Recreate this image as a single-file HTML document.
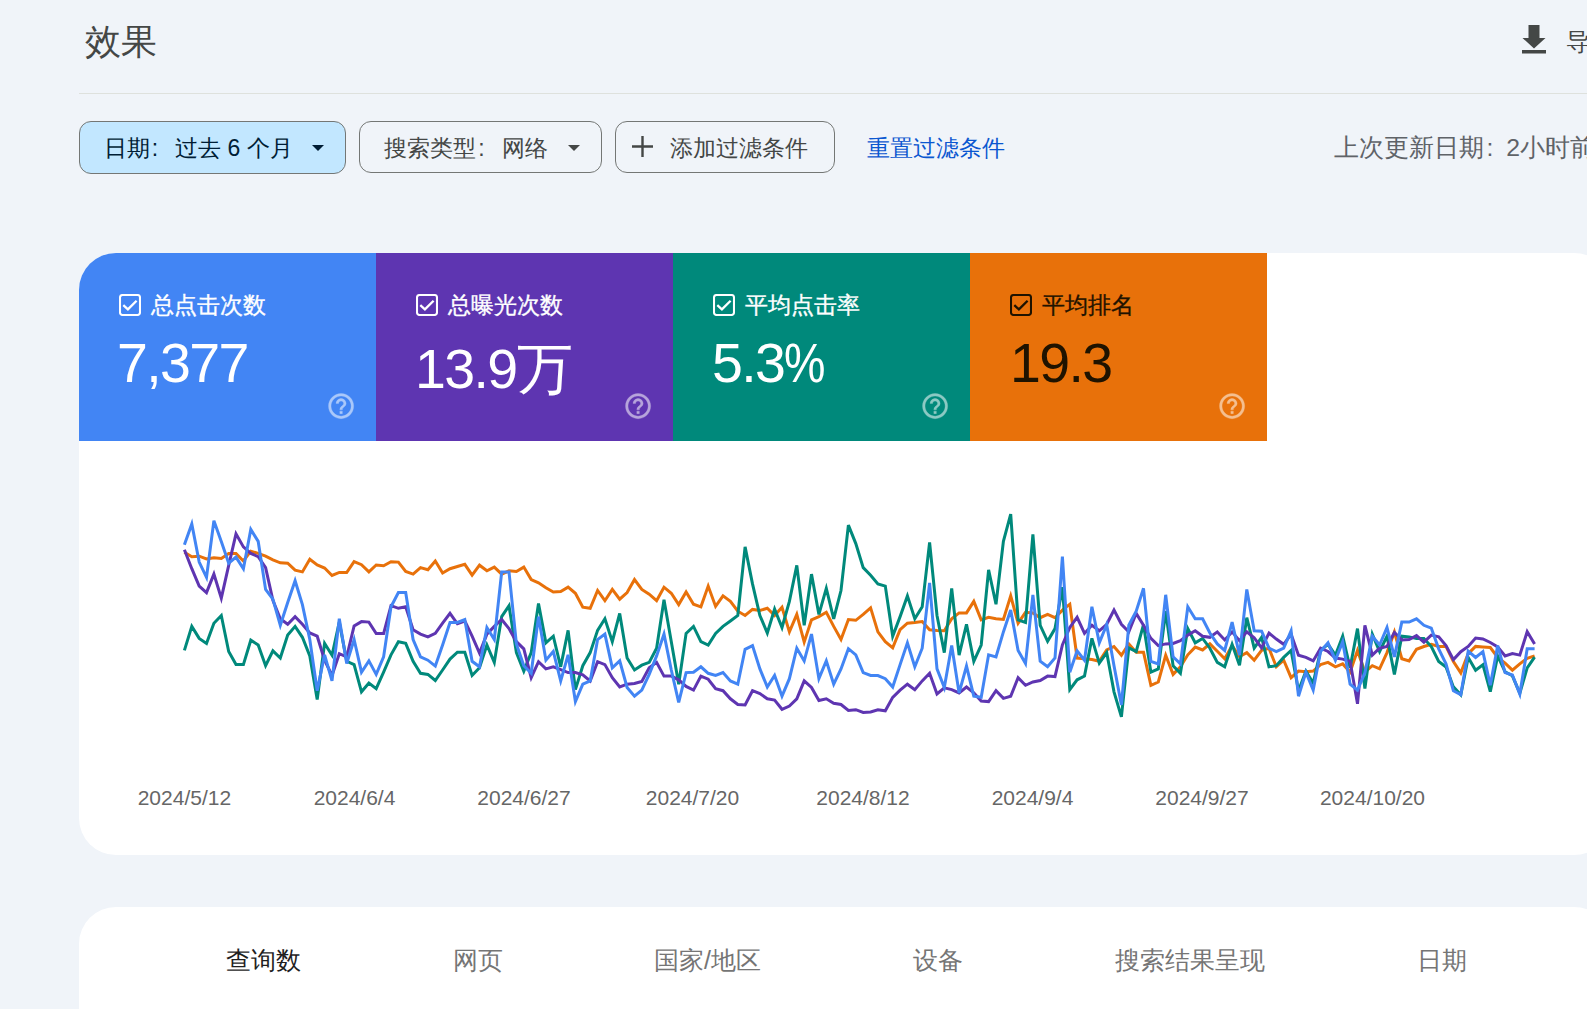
<!DOCTYPE html>
<html><head><meta charset="utf-8">
<style>
html,body{margin:0;padding:0;width:1587px;height:1009px;overflow:hidden;background:#f0f4f9;}
body{position:relative;font-family:"Liberation Sans",sans-serif;}
.a{position:absolute;line-height:1;white-space:nowrap;}
.title{left:85px;top:24px;font-size:36px;color:#444746;}
.hr{position:absolute;left:79px;top:93px;width:1520px;height:1px;background:#dee1dd;}
.chip{position:absolute;top:121px;height:51px;border:1px solid #747775;border-radius:12px;box-sizing:border-box;}
.chip1{left:79px;width:267px;height:53px;background:#c2e7ff;}
.chip2{left:359px;width:243px;height:52px;}
.chip3{left:615px;width:220px;height:52px;}
.ct{font-size:23px;top:137px;color:#444746;}
.cl{display:inline-block;width:calc(1em + 2.5px);text-indent:0.1em;}
.tri{position:absolute;width:0;height:0;border-left:6.3px solid transparent;border-right:6.3px solid transparent;border-top:6.5px solid #444746;}
.card{position:absolute;top:253px;width:297px;height:188px;}
.cb{position:absolute;top:294px;width:22px;height:22px;box-sizing:border-box;border:2.2px solid #fff;border-radius:3px;}
.lbl{font-size:23px;top:293.6px;color:#fff;-webkit-text-stroke:0.35px currentColor;}
.num{font-size:55.5px;color:#fff;letter-spacing:-1.6px;}
.help{position:absolute;top:393px;width:26px;height:26px;}
.white{position:absolute;left:79px;top:253px;width:1532px;height:602px;background:#fff;border-radius:37px;}
.white2{position:absolute;left:79px;top:907px;width:1532px;height:300px;background:#fff;border-radius:37px;}
.dl{position:absolute;top:787px;width:200px;text-align:center;font-size:21px;color:#666;line-height:1;}
.tab{font-size:25px;top:947.5px;color:#757575;}
</style></head><body>
<div class="a title">效果</div>
<!-- download icon -->
<svg style="position:absolute;left:1521px;top:24px" width="26" height="31" viewBox="0 0 26 31">
<path d="M7.5 1h11v13h6L13 24.5 1.5 14h6z" fill="#444746"/>
<rect x="1" y="26" width="24" height="3.5" fill="#444746"/>
</svg>
<div class="a" style="left:1566px;top:30px;font-size:24px;color:#444746">导出</div>
<div class="hr"></div>

<div class="chip chip1"></div>
<div class="a ct" style="left:103.5px;color:#001d35">日期<span class="cl">:</span>过去 6 个月</div>
<div class="tri" style="left:312px;top:144.5px;border-top-color:#001d35"></div>
<div class="chip chip2"></div>
<div class="a ct" style="left:384px">搜索类型<span class="cl">:</span>网络</div>
<div class="tri" style="left:568.3px;top:144.5px"></div>
<div class="chip chip3"></div>
<svg style="position:absolute;left:632px;top:136px" width="21" height="21" viewBox="0 0 21 21"><path d="M9.3 0h2.4v9.3H21v2.4h-9.3V21H9.3v-9.3H0V9.3h9.3z" fill="#444746"/></svg>
<div class="a ct" style="left:670px">添加过滤条件</div>
<div class="a ct" style="left:867px;color:#0b57d0">重置过滤条件</div>
<div class="a ct" style="left:1334px;top:136px;font-size:24.8px;color:#5f6368">上次更新日期<span class="cl" style="width:0.9em">:</span>2小时前</div>

<div class="white"></div>
<div class="card" style="left:79px;background:#4285f4;border-top-left-radius:37px"></div>
<div class="card" style="left:376px;background:#5e35b1"></div>
<div class="card" style="left:673px;background:#00897b"></div>
<div class="card" style="left:970px;background:#e8710a"></div>

<div class="a lbl" style="left:151px">总点击次数</div>
<div class="a num" style="left:117px;top:336px">7,377</div>
<div class="a lbl" style="left:448px">总曝光次数</div>
<div class="a num" style="left:415px;top:342px">13.9万</div>
<div class="a lbl" style="left:745px">平均点击率</div>
<div class="a num" style="left:712px;top:336px">5.3<span style="display:inline-block;transform:scaleX(0.84);transform-origin:0 0">%</span></div>
<div class="a lbl" style="left:1042px;color:#1f1300">平均排名</div>
<div class="a num" style="left:1010px;top:336px;color:#1f1300">19.3</div>

<svg style="position:absolute;left:119px;top:294px" width="22" height="22" viewBox="0 0 22 22"><rect x="1" y="1" width="20" height="20" rx="2.5" fill="none" stroke="#fff" stroke-width="2.1"/><path d="M4.3 11.2l4.6 4.2 8.7-8.7" fill="none" stroke="#fff" stroke-width="2.3"/></svg>
<svg style="position:absolute;left:325.9px;top:390.5px;opacity:0.55" width="30.2" height="30.2" viewBox="0 0 24 24"><path d="M11 18h2v-2h-2v2zm1-16C6.48 2 2 6.48 2 12s4.48 10 10 10 10-4.48 10-10S17.52 2 12 2zm0 18c-4.41 0-8-3.59-8-8s3.59-8 8-8 8 3.59 8 8-3.59 8-8 8zm0-14c-2.21 0-4 1.79-4 4h2c0-1.1.9-2 2-2s2 .9 2 2c0 2-3 1.75-3 5h2c0-2.25 3-2.5 3-5 0-2.21-1.79-4-4-4z" fill="#fff" stroke="#fff" stroke-width="0.25"/></svg>
<svg style="position:absolute;left:416px;top:294px" width="22" height="22" viewBox="0 0 22 22"><rect x="1" y="1" width="20" height="20" rx="2.5" fill="none" stroke="#fff" stroke-width="2.1"/><path d="M4.3 11.2l4.6 4.2 8.7-8.7" fill="none" stroke="#fff" stroke-width="2.3"/></svg>
<svg style="position:absolute;left:622.9px;top:390.5px;opacity:0.55" width="30.2" height="30.2" viewBox="0 0 24 24"><path d="M11 18h2v-2h-2v2zm1-16C6.48 2 2 6.48 2 12s4.48 10 10 10 10-4.48 10-10S17.52 2 12 2zm0 18c-4.41 0-8-3.59-8-8s3.59-8 8-8 8 3.59 8 8-3.59 8-8 8zm0-14c-2.21 0-4 1.79-4 4h2c0-1.1.9-2 2-2s2 .9 2 2c0 2-3 1.75-3 5h2c0-2.25 3-2.5 3-5 0-2.21-1.79-4-4-4z" fill="#fff" stroke="#fff" stroke-width="0.25"/></svg>
<svg style="position:absolute;left:713px;top:294px" width="22" height="22" viewBox="0 0 22 22"><rect x="1" y="1" width="20" height="20" rx="2.5" fill="none" stroke="#fff" stroke-width="2.1"/><path d="M4.3 11.2l4.6 4.2 8.7-8.7" fill="none" stroke="#fff" stroke-width="2.3"/></svg>
<svg style="position:absolute;left:919.9px;top:390.5px;opacity:0.55" width="30.2" height="30.2" viewBox="0 0 24 24"><path d="M11 18h2v-2h-2v2zm1-16C6.48 2 2 6.48 2 12s4.48 10 10 10 10-4.48 10-10S17.52 2 12 2zm0 18c-4.41 0-8-3.59-8-8s3.59-8 8-8 8 3.59 8 8-3.59 8-8 8zm0-14c-2.21 0-4 1.79-4 4h2c0-1.1.9-2 2-2s2 .9 2 2c0 2-3 1.75-3 5h2c0-2.25 3-2.5 3-5 0-2.21-1.79-4-4-4z" fill="#fff" stroke="#fff" stroke-width="0.25"/></svg>
<svg style="position:absolute;left:1010px;top:294px" width="22" height="22" viewBox="0 0 22 22"><rect x="1" y="1" width="20" height="20" rx="2.5" fill="none" stroke="#1f1300" stroke-width="2.1"/><path d="M4.3 11.2l4.6 4.2 8.7-8.7" fill="none" stroke="#1f1300" stroke-width="2.3"/></svg>
<svg style="position:absolute;left:1216.9px;top:390.5px;opacity:0.55" width="30.2" height="30.2" viewBox="0 0 24 24"><path d="M11 18h2v-2h-2v2zm1-16C6.48 2 2 6.48 2 12s4.48 10 10 10 10-4.48 10-10S17.52 2 12 2zm0 18c-4.41 0-8-3.59-8-8s3.59-8 8-8 8 3.59 8 8-3.59 8-8 8zm0-14c-2.21 0-4 1.79-4 4h2c0-1.1.9-2 2-2s2 .9 2 2c0 2-3 1.75-3 5h2c0-2.25 3-2.5 3-5 0-2.21-1.79-4-4-4z" fill="#fff" stroke="#fff" stroke-width="0.25"/></svg>
<!-- CHART -->
<svg style="position:absolute;left:0;top:0" width="1587" height="1009" viewBox="0 0 1587 1009"><polyline fill="none" stroke="#e8710a" stroke-width="3" points="184.4,552.3 191.8,556.7 199.2,556.2 206.5,558.9 213.9,557.8 221.3,558.4 228.7,553.4 236.0,553.4 243.4,561.0 250.8,551.2 258.2,553.4 265.6,556.2 272.9,559.9 280.3,562.8 287.7,563.2 295.1,570.2 302.4,571.9 309.8,559.3 317.2,565.0 324.6,568.0 332.0,575.5 339.3,572.4 346.7,572.6 354.1,561.7 361.5,564.7 368.9,571.9 376.2,565.0 383.6,565.8 391.0,561.7 398.4,562.1 405.7,571.5 413.1,574.1 420.5,567.6 427.9,569.8 435.3,561.0 442.6,573.0 450.0,568.7 457.4,566.5 464.8,564.3 472.1,575.2 479.5,565.2 486.9,570.8 494.3,567.1 501.7,574.1 509.0,570.8 516.4,571.5 523.8,567.1 531.2,579.6 538.5,582.8 545.9,587.8 553.3,592.0 560.7,591.6 568.1,587.2 575.4,593.3 582.8,607.2 590.2,608.3 597.6,590.5 604.9,600.7 612.3,589.4 619.7,599.2 627.1,592.6 634.5,579.6 641.8,589.4 649.2,594.2 656.6,600.7 664.0,587.2 671.3,593.3 678.7,604.6 686.1,592.0 693.5,604.2 700.9,606.8 708.2,586.1 715.6,606.4 723.0,595.9 730.4,601.4 737.8,611.2 745.1,615.5 752.5,609.4 759.9,610.5 767.3,608.3 774.6,615.5 782.0,607.2 789.4,631.9 796.8,614.4 804.2,642.1 811.5,619.9 818.9,616.6 826.3,612.3 833.7,626.4 841.0,639.5 848.4,619.5 855.8,620.3 863.2,614.4 870.6,607.9 877.9,631.9 885.3,641.7 892.7,647.8 900.1,629.7 907.4,623.2 914.8,622.5 922.2,621.6 929.6,629.7 937.0,630.4 944.3,630.8 951.7,618.8 959.1,612.9 966.5,612.9 973.8,601.4 981.2,619.9 988.6,617.3 996.0,618.8 1003.4,619.5 1010.7,595.9 1018.1,623.2 1025.5,612.3 1032.9,612.9 1040.2,617.7 1047.6,614.4 1055.0,617.7 1062.4,610.1 1069.8,604.2 1077.1,658.0 1084.5,658.7 1091.9,659.6 1099.3,661.3 1106.7,650.0 1114.0,646.5 1121.4,655.2 1128.8,643.9 1136.2,652.2 1143.5,652.2 1150.9,685.3 1158.3,682.0 1165.7,655.2 1173.1,674.4 1180.4,666.8 1187.8,654.8 1195.2,647.1 1202.6,650.0 1209.9,643.9 1217.3,651.3 1224.7,658.7 1232.1,645.6 1239.5,656.5 1246.8,652.6 1254.2,660.2 1261.6,650.4 1269.0,648.2 1276.3,666.8 1283.7,660.2 1291.1,677.7 1298.5,671.1 1305.9,671.8 1313.2,671.1 1320.6,664.6 1328.0,662.4 1335.4,666.8 1342.7,663.9 1350.1,672.2 1357.5,650.4 1364.9,672.2 1372.3,665.7 1379.6,668.9 1387.0,652.6 1394.4,631.9 1401.8,658.7 1409.1,660.9 1416.5,649.3 1423.9,646.5 1431.3,644.3 1438.7,646.4 1446.0,646.4 1453.4,661.5 1460.8,672.9 1468.2,653.6 1475.6,646.4 1482.9,646.9 1490.3,647.5 1497.7,657.5 1505.1,663.1 1512.4,670.2 1519.8,663.9 1527.2,658.3 1534.6,655.9"/><polyline fill="none" stroke="#00897b" stroke-width="3" points="184.4,650.4 191.8,626.4 199.2,638.4 206.5,643.4 213.9,623.2 221.3,615.5 228.7,651.5 236.0,664.6 243.4,664.6 250.8,640.2 258.2,645.0 265.6,665.7 272.9,650.8 280.3,658.0 287.7,635.1 295.1,626.4 302.4,637.3 309.8,655.9 317.2,699.5 324.6,643.4 332.0,655.2 339.3,622.1 346.7,661.3 354.1,664.6 361.5,691.8 368.9,683.1 376.2,688.6 383.6,672.2 391.0,654.8 398.4,641.7 405.7,643.4 413.1,661.3 420.5,673.3 427.9,674.4 435.3,680.5 442.6,670.0 450.0,659.1 457.4,652.2 464.8,652.2 472.1,675.5 479.5,667.8 486.9,645.0 494.3,662.4 501.7,616.6 509.0,605.7 516.4,652.6 523.8,671.1 531.2,652.6 538.5,603.5 545.9,642.8 553.3,636.2 560.7,666.8 568.1,630.4 575.4,689.6 582.8,665.7 590.2,652.6 597.6,630.4 604.9,618.8 612.3,641.7 619.7,613.4 627.1,658.0 634.5,670.0 641.8,665.2 649.2,662.4 656.6,648.2 664.0,599.8 671.3,641.7 678.7,684.2 686.1,633.4 693.5,626.4 700.9,641.7 708.2,645.0 715.6,633.4 723.0,626.4 730.4,621.0 737.8,615.5 745.1,546.9 752.5,583.9 759.9,615.5 767.3,633.0 774.6,609.0 782.0,627.5 789.4,601.4 796.8,565.4 804.2,625.3 811.5,574.1 818.9,614.4 826.3,588.3 833.7,618.8 841.0,590.5 848.4,525.1 855.8,543.6 863.2,567.6 870.6,575.2 877.9,583.9 885.3,586.1 892.7,636.2 900.1,616.6 907.4,595.9 914.8,618.8 922.2,606.8 929.6,542.5 937.0,615.5 944.3,652.6 951.7,588.3 959.1,655.2 966.5,624.3 973.8,661.3 981.2,645.0 988.6,569.8 996.0,604.2 1003.4,541.4 1010.7,514.2 1018.1,619.9 1025.5,622.5 1032.9,534.4 1040.2,625.3 1047.6,641.3 1055.0,628.6 1062.4,587.2 1069.8,689.6 1077.1,679.8 1084.5,676.1 1091.9,638.4 1099.3,663.1 1106.7,652.6 1114.0,691.8 1121.4,716.9 1128.8,647.8 1136.2,651.5 1143.5,624.7 1150.9,672.2 1158.3,668.9 1165.7,611.2 1173.1,665.7 1180.4,673.3 1187.8,628.6 1195.2,642.8 1202.6,638.4 1209.9,648.2 1217.3,662.4 1224.7,666.8 1232.1,644.3 1239.5,665.2 1246.8,617.7 1254.2,648.2 1261.6,637.3 1269.0,666.8 1276.3,665.7 1283.7,657.4 1291.1,650.4 1298.5,690.7 1305.9,671.1 1313.2,683.1 1320.6,650.4 1328.0,644.3 1335.4,655.2 1342.7,636.2 1350.1,667.8 1357.5,628.6 1364.9,688.6 1372.3,634.1 1379.6,651.5 1387.0,636.2 1394.4,674.4 1401.8,636.2 1409.1,636.9 1416.5,638.4 1423.9,638.4 1431.3,646.5 1438.7,661.5 1446.0,667.0 1453.4,686.9 1460.8,694.8 1468.2,657.5 1475.6,670.2 1482.9,664.7 1490.3,691.6 1497.7,655.9 1505.1,671.8 1512.4,675.8 1519.8,693.2 1527.2,667.8 1534.6,657.1"/><polyline fill="none" stroke="#5e35b1" stroke-width="3" points="184.4,549.7 191.8,568.7 199.2,586.1 206.5,592.6 213.9,574.1 221.3,598.1 228.7,565.4 236.0,533.8 243.4,546.9 250.8,553.4 258.2,556.7 265.6,567.6 272.9,600.3 280.3,618.8 287.7,624.3 295.1,616.6 302.4,624.3 309.8,633.0 317.2,636.2 324.6,660.2 332.0,675.5 339.3,653.7 346.7,656.9 354.1,626.0 361.5,621.6 368.9,622.1 376.2,633.6 383.6,633.6 391.0,605.7 398.4,608.3 405.7,606.8 413.1,629.7 420.5,634.1 427.9,636.9 435.3,633.4 442.6,623.2 450.0,613.4 457.4,623.8 464.8,621.0 472.1,636.2 479.5,653.1 486.9,634.1 494.3,626.4 501.7,619.5 509.0,628.6 516.4,641.7 523.8,648.9 531.2,677.7 538.5,661.7 545.9,668.9 553.3,666.8 560.7,669.6 568.1,672.6 575.4,672.6 582.8,674.8 590.2,680.9 597.6,661.7 604.9,664.6 612.3,677.7 619.7,687.0 627.1,684.2 634.5,683.5 641.8,681.4 649.2,667.8 656.6,662.4 664.0,676.1 671.3,676.1 678.7,679.8 686.1,686.4 693.5,690.1 700.9,676.1 708.2,679.2 715.6,688.6 723.0,690.7 730.4,698.8 737.8,704.5 745.1,704.9 752.5,690.7 759.9,693.6 767.3,698.8 774.6,700.1 782.0,709.3 789.4,706.0 796.8,698.8 804.2,680.9 811.5,687.5 818.9,700.5 826.3,698.8 833.7,703.2 841.0,704.5 848.4,710.4 855.8,709.7 863.2,712.5 870.6,711.9 877.9,709.7 885.3,710.8 892.7,697.3 900.1,690.1 907.4,684.2 914.8,689.6 922.2,680.9 929.6,673.3 937.0,694.0 944.3,687.9 951.7,689.6 959.1,692.9 966.5,687.0 973.8,692.9 981.2,701.0 988.6,701.6 996.0,690.7 1003.4,698.4 1010.7,696.2 1018.1,677.7 1025.5,685.3 1032.9,682.0 1040.2,680.5 1047.6,676.1 1055.0,676.6 1062.4,645.0 1069.8,627.5 1077.1,617.3 1084.5,633.4 1091.9,625.3 1099.3,630.8 1106.7,624.3 1114.0,610.1 1121.4,624.3 1128.8,631.9 1136.2,613.4 1143.5,625.3 1150.9,638.4 1158.3,645.6 1165.7,643.9 1173.1,643.4 1180.4,640.6 1187.8,635.1 1195.2,630.8 1202.6,636.2 1209.9,637.3 1217.3,631.9 1224.7,639.9 1232.1,631.9 1239.5,640.6 1246.8,631.9 1254.2,637.8 1261.6,647.8 1269.0,633.0 1276.3,639.1 1283.7,644.3 1291.1,634.1 1298.5,655.2 1305.9,657.4 1313.2,660.9 1320.6,648.2 1328.0,651.5 1335.4,658.0 1342.7,659.1 1350.1,661.3 1357.5,703.8 1364.9,625.3 1372.3,655.2 1379.6,648.2 1387.0,646.5 1394.4,632.5 1401.8,639.9 1409.1,639.5 1416.5,635.6 1423.9,642.1 1431.3,635.1 1438.7,636.9 1446.0,645.6 1453.4,659.6 1460.8,651.7 1468.2,646.4 1475.6,638.0 1482.9,639.0 1490.3,642.5 1497.7,646.9 1505.1,655.9 1512.4,653.6 1519.8,655.1 1527.2,631.7 1534.6,644.0"/><polyline fill="none" stroke="#4285f4" stroke-width="3" points="184.4,544.7 191.8,524.0 199.2,562.1 206.5,577.4 213.9,520.7 221.3,541.4 228.7,563.2 236.0,557.1 243.4,568.7 250.8,529.4 258.2,541.4 265.6,589.4 272.9,599.2 280.3,625.3 287.7,602.5 295.1,580.7 302.4,604.6 309.8,639.5 317.2,690.7 324.6,654.8 332.0,680.9 339.3,618.8 346.7,663.5 354.1,639.5 361.5,672.2 368.9,660.9 376.2,674.4 383.6,656.9 391.0,606.8 398.4,592.6 405.7,592.6 413.1,639.5 420.5,656.9 427.9,660.2 435.3,666.1 442.6,645.0 450.0,622.5 457.4,622.5 464.8,619.5 472.1,661.3 479.5,666.8 486.9,627.5 494.3,639.5 501.7,571.9 509.0,571.9 516.4,643.9 523.8,665.7 531.2,673.3 538.5,616.6 545.9,660.2 553.3,651.5 560.7,680.9 568.1,654.8 575.4,701.6 582.8,684.2 590.2,680.9 597.6,639.5 604.9,634.1 612.3,667.8 619.7,660.9 627.1,687.5 634.5,696.2 641.8,690.1 649.2,674.4 656.6,655.9 664.0,634.1 671.3,670.0 678.7,702.3 686.1,672.6 693.5,672.2 700.9,666.8 708.2,673.3 715.6,675.5 723.0,672.6 730.4,680.9 737.8,684.2 745.1,649.3 752.5,645.6 759.9,668.9 767.3,687.0 774.6,675.5 782.0,696.2 789.4,678.7 796.8,648.2 804.2,660.9 811.5,634.1 818.9,678.7 826.3,660.9 833.7,684.2 841.0,668.9 848.4,648.7 855.8,654.8 863.2,672.6 870.6,675.5 877.9,675.5 885.3,678.7 892.7,687.0 900.1,664.6 907.4,642.8 914.8,666.8 922.2,648.2 929.6,582.8 937.0,668.9 944.3,687.5 951.7,645.6 959.1,692.9 966.5,666.1 973.8,696.2 981.2,697.3 988.6,654.8 996.0,656.9 1003.4,631.9 1010.7,610.1 1018.1,650.4 1025.5,663.5 1032.9,594.8 1040.2,661.3 1047.6,666.8 1055.0,658.0 1062.4,556.7 1069.8,672.2 1077.1,650.8 1084.5,660.2 1091.9,606.8 1099.3,642.8 1106.7,624.7 1114.0,665.7 1121.4,704.9 1128.8,625.3 1136.2,611.2 1143.5,588.3 1150.9,661.3 1158.3,663.9 1165.7,594.8 1173.1,656.9 1180.4,663.9 1187.8,606.8 1195.2,618.8 1202.6,618.8 1209.9,633.0 1217.3,643.9 1224.7,650.4 1232.1,622.1 1239.5,655.2 1246.8,589.4 1254.2,630.8 1261.6,631.2 1269.0,648.2 1276.3,651.5 1283.7,648.2 1291.1,630.8 1298.5,696.2 1305.9,672.2 1313.2,690.1 1320.6,651.5 1328.0,642.8 1335.4,660.2 1342.7,641.7 1350.1,684.2 1357.5,690.1 1364.9,672.8 1372.3,636.2 1379.6,645.0 1387.0,627.5 1394.4,656.9 1401.8,622.1 1409.1,622.1 1416.5,618.8 1423.9,625.3 1431.3,628.2 1438.7,648.8 1446.0,663.9 1453.4,690.8 1460.8,694.8 1468.2,651.2 1475.6,657.5 1482.9,651.7 1490.3,685.3 1497.7,645.6 1505.1,672.6 1512.4,675.0 1519.8,694.0 1527.2,648.8 1534.6,648.8"/></svg>

<div class="dl" style="left:84.4px">2024/5/12</div>
<div class="dl" style="left:254.5px">2024/6/4</div>
<div class="dl" style="left:424px">2024/6/27</div>
<div class="dl" style="left:592.5px">2024/7/20</div>
<div class="dl" style="left:763px">2024/8/12</div>
<div class="dl" style="left:932.5px">2024/9/4</div>
<div class="dl" style="left:1102px">2024/9/27</div>
<div class="dl" style="left:1272.5px">2024/10/20</div>

<div class="white2"></div>
<div class="a tab" style="left:226px;color:#1f1f1f">查询数</div>
<div class="a tab" style="left:453px">网页</div>
<div class="a tab" style="left:654px">国家/地区</div>
<div class="a tab" style="left:913px">设备</div>
<div class="a tab" style="left:1115px">搜索结果呈现</div>
<div class="a tab" style="left:1417px">日期</div>
</body></html>
